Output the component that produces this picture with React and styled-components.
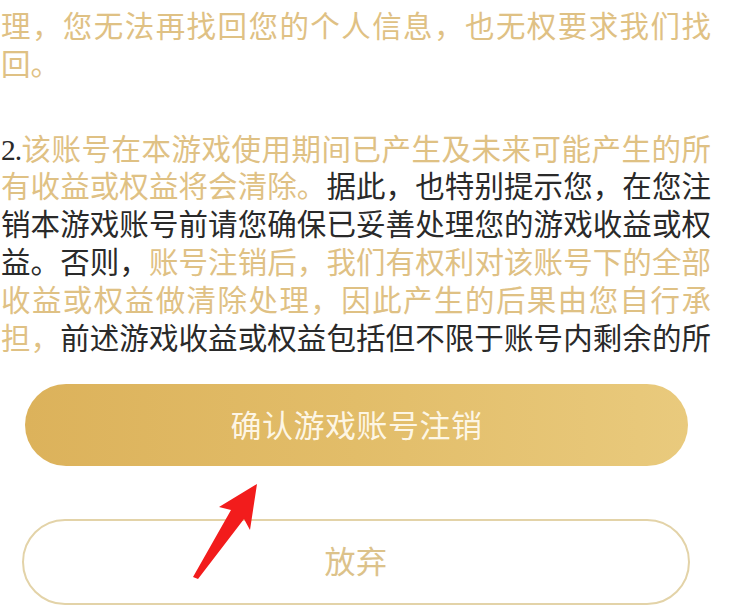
import React from "react";
import styled, { createGlobalStyle } from "styled-components";

const GlobalStyle = createGlobalStyle`
  html, body {
    margin: 0;
    padding: 0;
    background: #ffffff;
  }
  body {
    font-family: "Noto Sans CJK SC", "Noto Sans", sans-serif;
  }
`;

const Page = styled.div`
  position: relative;
  width: 729px;
  height: 615px;
  overflow: hidden;
  background: #ffffff;
`;

const Article = styled.div`
  width: 710px;
  padding: 6px 0 0 1px;
`;

const Paragraph = styled.div`
  margin-bottom: ${(p) => p.$gap || 0}px;
`;

const Line = styled.div`
  font-size: 29.5px;
  line-height: 37.8px;
  height: 37.8px;
  color: #2a2a2a;
  white-space: nowrap;
  text-align: ${(p) => (p.$last ? "left" : "justify")};
  text-align-last: ${(p) => (p.$last ? "left" : "justify")};
`;

const Gold = styled.span`
  color: #dfc184;
`;

const Num = styled.span`
  font-family: "Liberation Serif", serif;
  color: #2a2a2a;
  letter-spacing: -1px;
`;

const Actions = styled.div`
  display: flex;
  flex-direction: column;
  align-items: flex-start;
  padding-top: 29px;
`;

const PrimaryButton = styled.button`
  width: 663px;
  height: 82px;
  margin-left: 25px;
  border: none;
  border-radius: 41px;
  background: linear-gradient(90deg, #dcb25b 0%, #e2bd69 50%, #e9ca7d 100%);
  color: rgba(255, 250, 238, 0.95);
  font-family: "Noto Sans CJK SC", "Noto Sans", sans-serif;
  font-size: 31px;
  letter-spacing: 0.5px;
  padding: 0 0 4px;
  cursor: pointer;
`;

const SecondaryButton = styled.button`
  width: 668px;
  height: 86px;
  margin: 53px 0 0 22px;
  border: 2px solid #e3d3a8;
  border-radius: 43px;
  background: #ffffff;
  color: #dcc28a;
  font-family: "Noto Sans CJK SC", "Noto Sans", sans-serif;
  font-size: 31px;
  letter-spacing: 0.5px;
  padding: 0 0 6px;
  cursor: pointer;
`;

const Arrow = styled.svg`
  position: absolute;
  left: 0;
  top: 0;
  pointer-events: none;
`;

const App = () => {
  return (
    <Page>
      <GlobalStyle />
      <Article>
        <Paragraph $gap={47}>
          <Line>
            <Gold>理，您无法再找回您的个人信息，也无权要求我们找</Gold>
          </Line>
          <Line $last>
            <Gold>回。</Gold>
          </Line>
        </Paragraph>
        <Paragraph>
          <Line>
            <Num>2.</Num>
            <Gold>该账号在本游戏使用期间已产生及未来可能产生的所</Gold>
          </Line>
          <Line>
            <Gold>有收益或权益将会清除。</Gold>据此，也特别提示您，在您注
          </Line>
          <Line>销本游戏账号前请您确保已妥善处理您的游戏收益或权</Line>
          <Line>
            益。否则，<Gold>账号注销后，我们有权利对该账号下的全部</Gold>
          </Line>
          <Line>
            <Gold>收益或权益做清除处理，因此产生的后果由您自行承</Gold>
          </Line>
          <Line>
            <Gold>担，</Gold>前述游戏收益或权益包括但不限于账号内剩余的所
          </Line>
        </Paragraph>
      </Article>
      <Actions>
        <PrimaryButton>确认游戏账号注销</PrimaryButton>
        <SecondaryButton>放弃</SecondaryButton>
      </Actions>
      <Arrow width="729" height="615" viewBox="0 0 729 615">
        <polygon
          points="257,484 219,507 231,510 193,577 198,579 244,519 250,530"
          fill="#f21c1c"
        />
      </Arrow>
    </Page>
  );
};

export default App;
